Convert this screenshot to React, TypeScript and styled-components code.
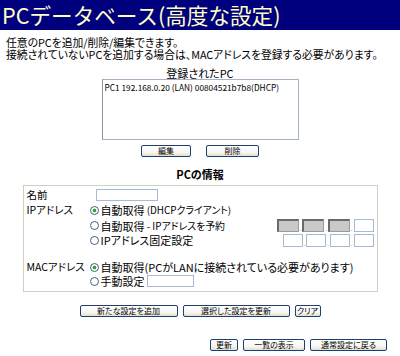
import React from "react";
import styled, { createGlobalStyle } from "styled-components";

const GlobalStyle = createGlobalStyle`
  html, body { margin: 0; padding: 0; background: #ffffff; }
  body {
    font-family: "Noto Sans CJK JP", "Noto Sans", sans-serif;
    font-feature-settings: "palt";
    color: #000000;
  }
  * { box-sizing: border-box; }
`;

const Page = styled.div`
  width: 400px;
  height: 356px;
  overflow: hidden;
  display: flex;
  flex-direction: column;
`;

const Header = styled.div`
  height: 30px;
  background: #00007f;
  display: flex;
  align-items: center;
  padding-left: 2px;
`;

const Title = styled.h1`
  margin: 0;
  font-size: 21.6px;
  font-weight: 400;
  font-feature-settings: normal;
  color: #ffffc4;
  line-height: 30px;
`;

const Intro = styled.div`
  margin-top: 6px;
  padding-left: 6px;
  font-size: 10.8px;
  line-height: 12px;
`;

const IntroLine = styled.p`
  margin: 0;
  white-space: nowrap;
`;

const Center = styled.div`
  display: flex;
  flex-direction: column;
  align-items: center;
`;

const Caption = styled.div`
  margin-top: 8px;
  font-size: 11px;
  line-height: 11px;
`;

const ListBox = styled.div`
  width: 197px;
  height: 61px;
  border: 1px solid #a5b3c5;
  border-left-color: #8a97a8;
  background: #ffffff;
  padding: 2px 0 0 2px;
`;

const ListItem = styled.div`
  font-size: 8.3px;
  line-height: 10px;
  white-space: nowrap;
`;

const ButtonRow = styled.div<{ $gap: number; $top: number }>`
  display: flex;
  gap: ${(p) => p.$gap}px;
  margin-top: ${(p) => p.$top}px;
`;

const Button = styled.button<{ $w: number }>`
  width: ${(p) => p.$w}px;
  height: 12px;
  padding: 0;
  margin: 0;
  border: 1px solid #1c3f6e;
  border-radius: 2px;
  background: linear-gradient(#ffffff 0%, #f7f6f2 65%, #e2dfd2 100%);
  font-family: inherit;
  font-size: 8px;
  line-height: 10px;
  color: #000000;
  font-feature-settings: "palt";
  white-space: nowrap;
`;

const SectionTitle = styled.div`
  margin-top: 10px;
  font-size: 11px;
  line-height: 14px;
  font-weight: 700;
`;

const Fieldset = styled.div`
  margin-top: 4px;
  width: 355px;
  height: 107px;
  border: 1px solid #d0d0bf;
  padding: 2px 3px 3px 3px;
  display: grid;
  grid-template-columns: 62px 1fr;
  grid-template-rows: 14px 16px 15px 14px 13px 14px 14px;
  font-size: 11px;
`;

const Label = styled.div<{ $row: number }>`
  grid-column: 1;
  grid-row: ${(p) => p.$row};
  display: flex;
  align-items: center;
  white-space: nowrap;
  line-height: 12px;
  font-size: 10.5px;
`;

const Cell = styled.div<{ $row: number }>`
  grid-column: 2;
  grid-row: ${(p) => p.$row};
  display: flex;
  align-items: center;
  justify-content: space-between;
  white-space: nowrap;
  line-height: 12px;
`;

const Choice = styled.span`
  display: flex;
  align-items: center;
`;

const Tail = styled.span`
  font-size: 9.9px;
  white-space: pre;
`;

const Radio = styled.span<{ $on?: boolean }>`
  width: 9px;
  height: 9px;
  border-radius: 50%;
  border: 1px solid #3f5f8a;
  background: ${(p) =>
    p.$on
      ? "radial-gradient(circle, #2fa82f 0, #2fa82f 1.6px, #ffffff 2.2px)"
      : "#ffffff"};
  margin: 0 2px 0 1px;
  flex: none;
`;

const TextInput = styled.span<{ $w: number; $left: number }>`
  display: block;
  width: ${(p) => p.$w}px;
  height: 12px;
  margin-left: ${(p) => p.$left}px;
  border: 1px solid #a6bad4;
  background: #ffffff;
`;

const IpGroup = styled.span`
  display: flex;
  align-items: flex-end;
`;

const Octet = styled.span<{ $off?: boolean }>`
  display: block;
  width: ${(p) => (p.$off ? 22 : 20)}px;
  height: 13px;
  background: ${(p) => (p.$off ? "#c9c9c9" : "#ffffff")};
  border: 1px solid #a6bad4;
  ${(p) =>
    p.$off &&
    `border-top: 2px solid #6a6a6a; border-left: 2px solid #6a6a6a; border-right: 1px solid #9a9a9a; border-bottom: 1px solid #9a9a9a;`}
`;

const Dot = styled.span`
  display: block;
  width: 3.6px;
  font-size: 6px;
  line-height: 6px;
  color: #666;
  text-align: center;
`;

const FooterRow = styled.div`
  display: flex;
  justify-content: flex-end;
  gap: 5px;
  margin-top: 22px;
  padding-right: 13px;
`;

function IpBoxes({ off }: { off: boolean }) {
  return (
    <IpGroup>
      <Octet $off={off} />
      <Dot>.</Dot>
      <Octet $off={off} />
      <Dot>.</Dot>
      <Octet $off={off} />
      <Dot>.</Dot>
      <Octet />
    </IpGroup>
  );
}

export default function App() {
  return (
    <Page>
      <GlobalStyle />
      <Header>
        <Title>PCデータベース(高度な設定)</Title>
      </Header>
      <Intro>
        <IntroLine>任意のPCを追加/削除/編集できます。</IntroLine>
        <IntroLine>
          接続されていないPCを追加する場合は、MACアドレスを登録する必要があります。
        </IntroLine>
      </Intro>
      <Center>
        <Caption>登録されたPC</Caption>
        <ListBox>
          <ListItem>PC1 192.168.0.20 (LAN) 00804521b7b8(DHCP)</ListItem>
        </ListBox>
        <ButtonRow $gap={15} $top={5}>
          <Button $w={50}>編集</Button>
          <Button $w={53}>削除</Button>
        </ButtonRow>
        <SectionTitle>PCの情報</SectionTitle>
        <Fieldset>
          <Label $row={1}>名前</Label>
          <Cell $row={1}>
            <TextInput $w={62} $left={7} />
          </Cell>
          <Label $row={2}>IPアドレス</Label>
          <Cell $row={2}>
            <Choice>
              <Radio $on />
              自動取得<Tail>{" (DHCPクライアント)"}</Tail>
            </Choice>
          </Cell>
          <Cell $row={3}>
            <Choice>
              <Radio />
              自動取得<Tail>{" - IPアドレスを予約"}</Tail>
            </Choice>
            <IpBoxes off />
          </Cell>
          <Cell $row={4}>
            <Choice>
              <Radio />
              IPアドレス固定設定
            </Choice>
            <IpBoxes off={false} />
          </Cell>
          <Label $row={6}>MACアドレス</Label>
          <Cell $row={6}>
            <Choice>
              <Radio $on />
              自動取得(PCがLANに接続されている必要があります)
            </Choice>
          </Cell>
          <Cell $row={7}>
            <Choice>
              <Radio />
              手動設定
              <TextInput $w={47} $left={2} />
            </Choice>
          </Cell>
        </Fieldset>
        <ButtonRow $gap={5} $top={13}>
          <Button $w={98}>新たな設定を追加</Button>
          <Button $w={107}>選択した設定を更新</Button>
          <Button $w={26}>クリア</Button>
        </ButtonRow>
      </Center>
      <FooterRow>
        <Button $w={28}>更新</Button>
        <Button $w={62}>一覧の表示</Button>
        <Button $w={77}>通常設定に戻る</Button>
      </FooterRow>
    </Page>
  );
}
